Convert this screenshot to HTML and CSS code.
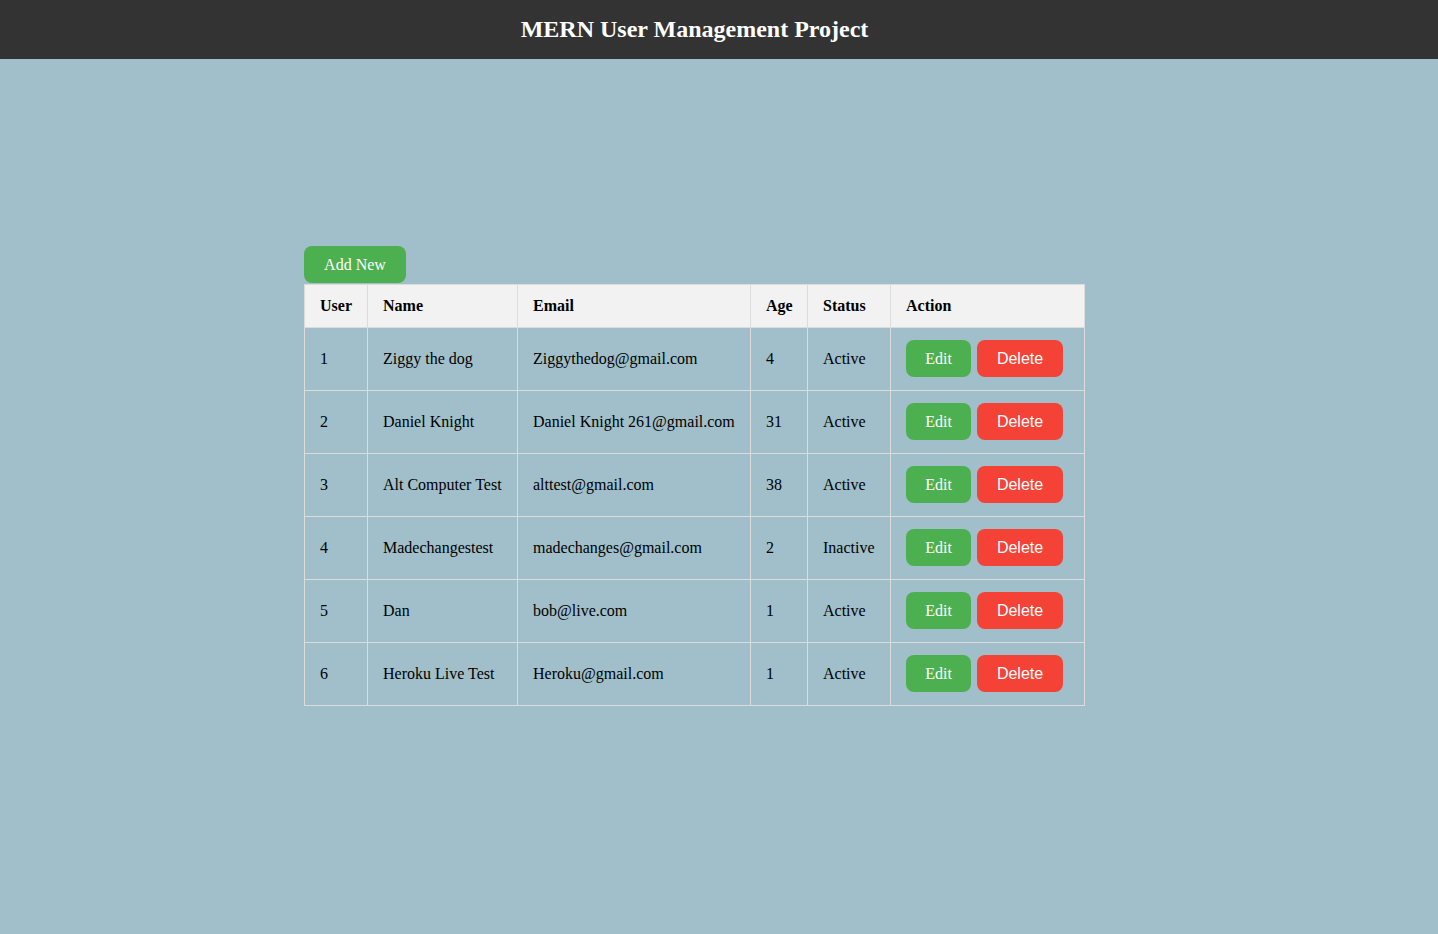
FILE: index.html
```html
<!DOCTYPE html>
<html>
<head>
<meta charset="utf-8">
<title>MERN User Management Project</title>
<link rel="stylesheet" href="styles.css">
</head>
<body>
<header class="topbar"><h1 class="title">MERN User Management Project</h1></header>
<main class="main">
  <div class="panel">
    <button class="btn btn-add">Add New</button>
    <table class="users">
      <colgroup>
        <col class="c-user"><col class="c-name"><col class="c-email"><col class="c-age"><col class="c-status"><col class="c-action">
      </colgroup>
      <thead>
        <tr><th>User</th><th>Name</th><th>Email</th><th>Age</th><th>Status</th><th>Action</th></tr>
      </thead>
      <tbody>
        <tr><td>1</td><td>Ziggy the dog</td><td>Ziggythedog@gmail.com</td><td>4</td><td>Active</td><td><div class="actions"><a class="btn btn-edit">Edit</a><button class="btn btn-del">Delete</button></div></td></tr>
        <tr><td>2</td><td>Daniel Knight</td><td>Daniel Knight 261@gmail.com</td><td>31</td><td>Active</td><td><div class="actions"><a class="btn btn-edit">Edit</a><button class="btn btn-del">Delete</button></div></td></tr>
        <tr><td>3</td><td>Alt Computer Test</td><td>alttest@gmail.com</td><td>38</td><td>Active</td><td><div class="actions"><a class="btn btn-edit">Edit</a><button class="btn btn-del">Delete</button></div></td></tr>
        <tr><td>4</td><td>Madechangestest</td><td>madechanges@gmail.com</td><td>2</td><td>Inactive</td><td><div class="actions"><a class="btn btn-edit">Edit</a><button class="btn btn-del">Delete</button></div></td></tr>
        <tr><td>5</td><td>Dan</td><td>bob@live.com</td><td>1</td><td>Active</td><td><div class="actions"><a class="btn btn-edit">Edit</a><button class="btn btn-del">Delete</button></div></td></tr>
        <tr><td>6</td><td>Heroku Live Test</td><td>Heroku@gmail.com</td><td>1</td><td>Active</td><td><div class="actions"><a class="btn btn-edit">Edit</a><button class="btn btn-del">Delete</button></div></td></tr>
      </tbody>
    </table>
  </div>
</main>
</body>
</html>
```
FILE: styles.css
```css
html, body {
  margin: 0;
  padding: 0;
}
body {
  background: #a0bfca;
  font-family: "Liberation Serif", "Times New Roman", serif;
  font-size: 16px;
  color: #000;
  min-height: 934px;
}
.topbar {
  height: 59px;
  background: #333333;
  display: flex;
  align-items: center;
  justify-content: center;
  padding-right: 49px;
}
.title {
  margin: 0;
  color: #fff;
  font-size: 24px;
  font-weight: bold;
  font-family: "Liberation Serif", "Times New Roman", serif;
}
.main {
  display: flex;
  justify-content: center;
  padding-right: 49px;
  padding-top: 187px;
}
.panel {
  display: flex;
  flex-direction: column;
  align-items: flex-start;
}
.btn {
  display: inline-flex;
  align-items: center;
  justify-content: center;
  border: none;
  color: #fff;
  border-radius: 8px;
  height: 37px;
  padding: 0;
  font-size: 16px;
  cursor: pointer;
  box-sizing: border-box;
}
.btn-add {
  background: #4caf50;
  width: 102px;
  font-family: "Liberation Serif", "Times New Roman", serif;
  margin-bottom: 1px;
}
.users {
  border-collapse: collapse;
  table-layout: fixed;
  width: 780px;
}
.c-user { width: 63px; }
.c-name { width: 150px; }
.c-email { width: 233px; }
.c-age { width: 57px; }
.c-status { width: 83px; }
.c-action { width: 194px; }
.users th, .users td {
  border: 1px solid #dcdcdc;
  padding: 12px 15px;
  text-align: left;
  white-space: nowrap;
  line-height: 18px;
}
.users th {
  background: #f2f2f2;
  font-weight: bold;
}
.users td {
  height: 37px;
  padding-bottom: 13px;
}
.actions {
  display: flex;
  gap: 6px;
}
.btn-edit {
  background: #4caf50;
  width: 65px;
  font-family: "Liberation Serif", "Times New Roman", serif;
}
.btn-del {
  background: #f44336;
  width: 86px;
  font-family: "Liberation Sans", Arial, sans-serif;
}
```
